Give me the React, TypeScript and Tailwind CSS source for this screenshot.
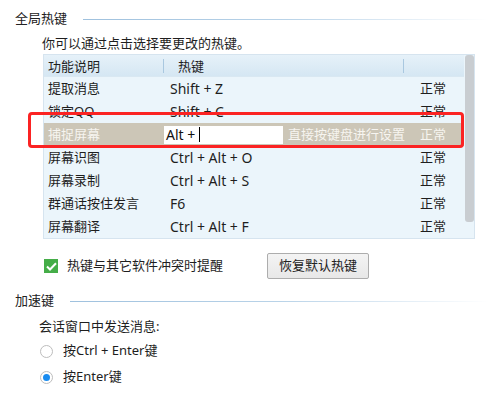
const rows = [
  { name: '提取消息', key: 'Shift + Z' },
  { name: '锁定QQ', key: 'Shift + C' },
  { name: '捕捉屏幕', key: '', active: true },
  { name: '屏幕识图', key: 'Ctrl + Alt + O' },
  { name: '屏幕录制', key: 'Ctrl + Alt + S' },
  { name: '群通话按住发言', key: 'F6' },
  { name: '屏幕翻译', key: 'Ctrl + Alt + F' },
]

const SectionTitle = ({ title }: { title: string }) => (
  <div className="flex items-center h-[20px] pl-[15px]">
    <span className="text-[13px] text-[#222]">{title}</span>
    <div className="flex-1 h-px ml-[16px] bg-gradient-to-r from-[#9fc1de] via-[#b9d3e8] to-[#ffffff]" />
  </div>
)

const App: React.FC = () => {
  return (
    <div
      className="relative w-[489px] h-[396px] overflow-hidden bg-white text-[13px] text-[#1e1e1e]"
      style={{ fontFamily: '"Noto Sans", "Noto Sans CJK SC", sans-serif' }}
    >
      <div className="pt-[9px]">
        <SectionTitle title="全局热键" />
      </div>

      <div className="ml-[42px] mt-[5px] h-[19px] leading-[19px]">你可以通过点击选择要更改的热键。</div>

      {/* table */}
      <div className="ml-[43px] mt-[1px] w-[432px] h-[185px] flex border border-[#d6e4ef] bg-[#ebf5fb]">
        <div className="flex-1 flex flex-col">
          <div className="flex items-center h-[22px] bg-gradient-to-b from-[#e6f1f9] to-[#d5e7f3] border-b border-[#d9e8f2]">
            <div className="w-[119px] pl-[4px] leading-[22px]">功能说明</div>
            <div className="w-px h-[14px] bg-[#a9c8e0]" />
            <div className="w-[239px] pl-[14px] leading-[22px]">热键</div>
            <div className="w-px h-[14px] bg-[#a9c8e0]" />
            <div className="flex-1" />
          </div>
          {rows.map((r) => (
            <div
              key={r.name}
              className={
                r.active
                  ? 'flex items-center h-[23px] bg-[#ccc6b7] text-[#f7f5f0]'
                  : 'flex items-center h-[23px]'
              }
            >
              <div className="w-[120px] pl-[4px] whitespace-nowrap">{r.name}</div>
              {r.active ? (
                <>
                  <div className="w-[119px] h-[18px] bg-white text-[#111] text-[14px] flex items-center pl-[2px] leading-[18px]">
                    Alt +
                    <span className="ml-[4px] w-px h-[15px] bg-black" />
                  </div>
                  <div className="w-[137px] pl-[5px] whitespace-nowrap">直接按键盘进行设置</div>
                </>
              ) : (
                <div className="w-[256px] pl-[6px] text-[14px] whitespace-nowrap">{r.key}</div>
              )}
              <div className="flex-1 whitespace-nowrap">正常</div>
            </div>
          ))}
        </div>
        <div className="w-[10px] pl-[1px] flex flex-col">
          <div className="w-[9px] h-[167px] rounded-[3px] bg-[#c9cdd1]" />
        </div>
      </div>

      {/* checkbox + button */}
      <div className="flex items-center mt-[14px] ml-[44px] h-[26px]">
        <div className="w-[14px] h-[14px] bg-[#45ad48] flex items-center justify-center">
          <svg width="11" height="9" viewBox="0 0 11 9">
            <path d="M1 4.5 L4 7.5 L10 1.2" fill="none" stroke="white" strokeWidth="2" />
          </svg>
        </div>
        <span className="ml-[9px]">热键与其它软件冲突时提醒</span>
        <button className="ml-[44px] w-[102px] h-[26px] border border-[#adadad] rounded-[2px] bg-gradient-to-b from-[#f4f4f4] to-[#e8e8e8] text-[#222] text-[13px]">
          恢复默认热键
        </button>
      </div>

      <div className="mt-[12px]">
        <SectionTitle title="加速键" />
      </div>

      <div className="ml-[39px] mt-[6px] h-[19px] leading-[19px]">会话窗口中发送消息:</div>

      <div className="ml-[40px] mt-[5px] flex items-center h-[20px]">
        <div className="w-[13px] h-[13px] rounded-full border border-[#bdbdbd] bg-white" />
        <span className="ml-[10px]">按Ctrl + Enter键</span>
      </div>
      <div className="ml-[40px] mt-[6px] flex items-center h-[20px]">
        <div className="w-[13px] h-[13px] rounded-full border border-[#bdbdbd] bg-white flex items-center justify-center">
          <div className="w-[7px] h-[7px] rounded-full bg-[#1a8cf0]" />
        </div>
        <span className="ml-[10px]">按Enter键</span>
      </div>

      {/* red annotation box */}
      <div className="absolute left-[28px] top-[112px] w-[436px] h-[36px] border-[3px] border-[#fb2323] rounded-[4px]" />
    </div>
  )
}

export default App
